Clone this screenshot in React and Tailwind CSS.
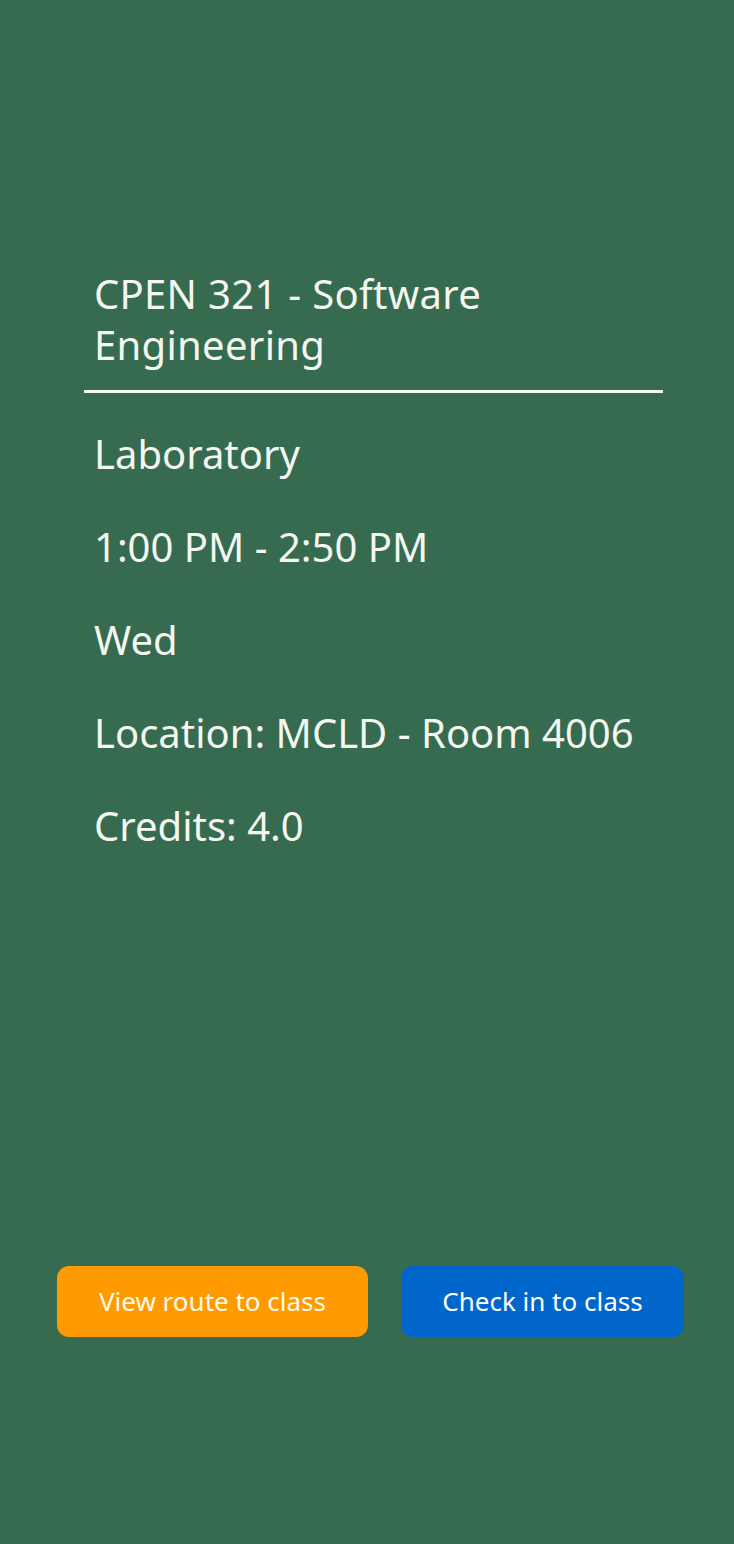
import React from 'react';

const details = ['Laboratory', '1:00 PM - 2:50 PM', 'Wed', 'Location: MCLD - Room 4006', 'Credits: 4.0'];

export default function App() {
    return (
        <div
            className="w-full min-h-[1544px] bg-[#366b50] flex flex-col text-[#f4f6f0]"
            style={{ fontFamily: '"Noto Sans", "Open Sans", sans-serif' }}
        >
            {/* Course info */}
            <div className="ml-[84px] w-[579px] pt-[268px]">
                <h1 className="px-[10px] text-[40px] leading-[51px] font-normal tracking-[0.3px]">
                    CPEN 321 - Software Engineering
                </h1>
                <div className="mt-[20px] h-[3px] bg-[#f4f6f0]" />
                <div className="px-[10px] pt-[34px] flex flex-col gap-[40px]">
                    {details.map((d) => (
                        <div key={d} className="text-[40px] leading-[53px]">
                            {d}
                        </div>
                    ))}
                </div>
            </div>

            {/* Actions */}
            <div className="mt-auto mb-[207px] flex pl-[57px] gap-[33px]">
                <button className="w-[311px] h-[71px] rounded-[12px] bg-[#ff9a00] text-[26px] text-[#fffbe8]">
                    View route to class
                </button>
                <button className="w-[283px] h-[71px] rounded-[12px] bg-[#0066cc] text-[26px] text-white">
                    Check in to class
                </button>
            </div>
        </div>
    );
}
